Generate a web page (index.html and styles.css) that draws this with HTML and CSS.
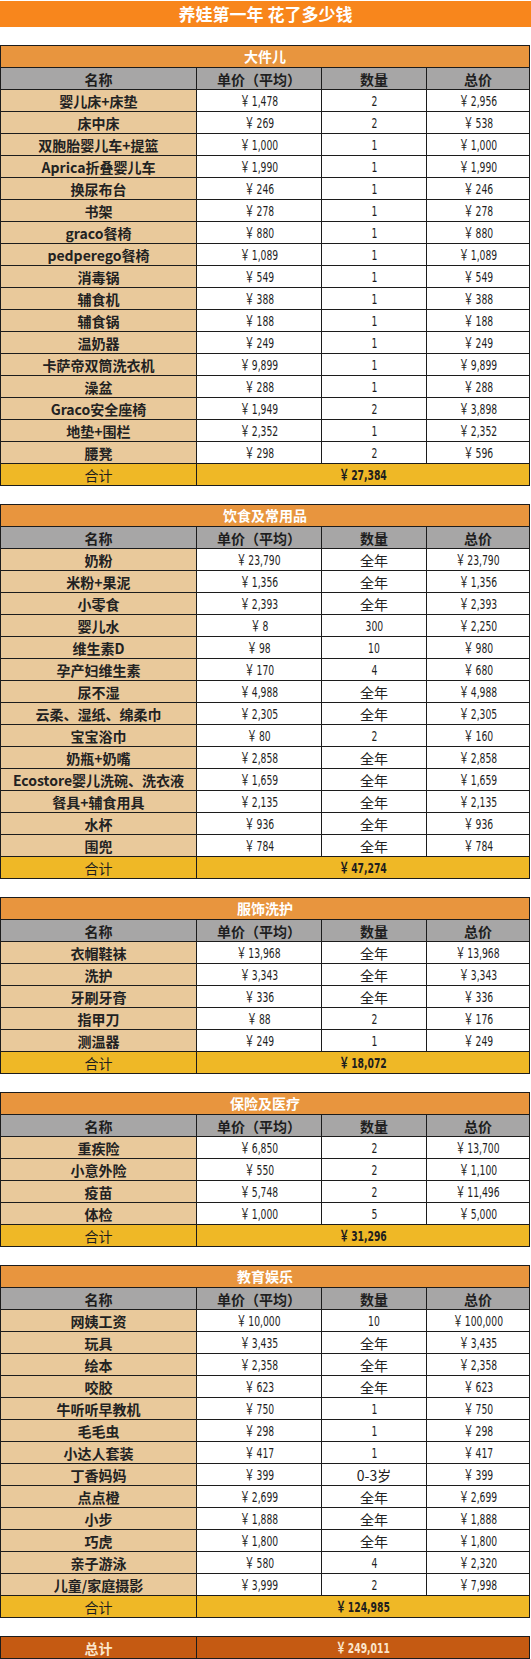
FILE: index.html
```html
<!DOCTYPE html>
<html lang="zh-CN">
<head>
<meta charset="utf-8">
<title>养娃第一年 花了多少钱</title>
<link rel="stylesheet" href="styles.css">
</head>
<body>
<div class="title">养娃第一年 花了多少钱</div>

<section class="sheet">
  <div class="sec">大件儿</div>
  <div class="row head"><div>名称</div><div>单价（平均）</div><div>数量</div><div>总价</div></div>
  <div class="row"><div class="name">婴儿床+床垫</div><div><span class="n"><span class="y">￥</span>1,478</span></div><div><span class="n">2</span></div><div><span class="n"><span class="y">￥</span>2,956</span></div></div>
  <div class="row"><div class="name">床中床</div><div><span class="n"><span class="y">￥</span>269</span></div><div><span class="n">2</span></div><div><span class="n"><span class="y">￥</span>538</span></div></div>
  <div class="row"><div class="name">双胞胎婴儿车+提篮</div><div><span class="n"><span class="y">￥</span>1,000</span></div><div><span class="n">1</span></div><div><span class="n"><span class="y">￥</span>1,000</span></div></div>
  <div class="row"><div class="name">Aprica折叠婴儿车</div><div><span class="n"><span class="y">￥</span>1,990</span></div><div><span class="n">1</span></div><div><span class="n"><span class="y">￥</span>1,990</span></div></div>
  <div class="row"><div class="name">换尿布台</div><div><span class="n"><span class="y">￥</span>246</span></div><div><span class="n">1</span></div><div><span class="n"><span class="y">￥</span>246</span></div></div>
  <div class="row"><div class="name">书架</div><div><span class="n"><span class="y">￥</span>278</span></div><div><span class="n">1</span></div><div><span class="n"><span class="y">￥</span>278</span></div></div>
  <div class="row"><div class="name">graco餐椅</div><div><span class="n"><span class="y">￥</span>880</span></div><div><span class="n">1</span></div><div><span class="n"><span class="y">￥</span>880</span></div></div>
  <div class="row"><div class="name">pedperego餐椅</div><div><span class="n"><span class="y">￥</span>1,089</span></div><div><span class="n">1</span></div><div><span class="n"><span class="y">￥</span>1,089</span></div></div>
  <div class="row"><div class="name">消毒锅</div><div><span class="n"><span class="y">￥</span>549</span></div><div><span class="n">1</span></div><div><span class="n"><span class="y">￥</span>549</span></div></div>
  <div class="row"><div class="name">辅食机</div><div><span class="n"><span class="y">￥</span>388</span></div><div><span class="n">1</span></div><div><span class="n"><span class="y">￥</span>388</span></div></div>
  <div class="row"><div class="name">辅食锅</div><div><span class="n"><span class="y">￥</span>188</span></div><div><span class="n">1</span></div><div><span class="n"><span class="y">￥</span>188</span></div></div>
  <div class="row"><div class="name">温奶器</div><div><span class="n"><span class="y">￥</span>249</span></div><div><span class="n">1</span></div><div><span class="n"><span class="y">￥</span>249</span></div></div>
  <div class="row"><div class="name">卡萨帝双筒洗衣机</div><div><span class="n"><span class="y">￥</span>9,899</span></div><div><span class="n">1</span></div><div><span class="n"><span class="y">￥</span>9,899</span></div></div>
  <div class="row"><div class="name">澡盆</div><div><span class="n"><span class="y">￥</span>288</span></div><div><span class="n">1</span></div><div><span class="n"><span class="y">￥</span>288</span></div></div>
  <div class="row"><div class="name">Graco安全座椅</div><div><span class="n"><span class="y">￥</span>1,949</span></div><div><span class="n">2</span></div><div><span class="n"><span class="y">￥</span>3,898</span></div></div>
  <div class="row"><div class="name">地垫+围栏</div><div><span class="n"><span class="y">￥</span>2,352</span></div><div><span class="n">1</span></div><div><span class="n"><span class="y">￥</span>2,352</span></div></div>
  <div class="row"><div class="name">腰凳</div><div><span class="n"><span class="y">￥</span>298</span></div><div><span class="n">2</span></div><div><span class="n"><span class="y">￥</span>596</span></div></div>
  <div class="row sum"><div class="lbl">合计</div><div class="span"><span class="n"><span class="y">￥</span>27,384</span></div></div>
</section>

<section class="sheet">
  <div class="sec">饮食及常用品</div>
  <div class="row head"><div>名称</div><div>单价（平均）</div><div>数量</div><div>总价</div></div>
  <div class="row"><div class="name">奶粉</div><div><span class="n"><span class="y">￥</span>23,790</span></div><div class="cn">全年</div><div><span class="n"><span class="y">￥</span>23,790</span></div></div>
  <div class="row"><div class="name">米粉+果泥</div><div><span class="n"><span class="y">￥</span>1,356</span></div><div class="cn">全年</div><div><span class="n"><span class="y">￥</span>1,356</span></div></div>
  <div class="row"><div class="name">小零食</div><div><span class="n"><span class="y">￥</span>2,393</span></div><div class="cn">全年</div><div><span class="n"><span class="y">￥</span>2,393</span></div></div>
  <div class="row"><div class="name">婴儿水</div><div><span class="n"><span class="y">￥</span>8</span></div><div><span class="n">300</span></div><div><span class="n"><span class="y">￥</span>2,250</span></div></div>
  <div class="row"><div class="name">维生素D</div><div><span class="n"><span class="y">￥</span>98</span></div><div><span class="n">10</span></div><div><span class="n"><span class="y">￥</span>980</span></div></div>
  <div class="row"><div class="name">孕产妇维生素</div><div><span class="n"><span class="y">￥</span>170</span></div><div><span class="n">4</span></div><div><span class="n"><span class="y">￥</span>680</span></div></div>
  <div class="row"><div class="name">尿不湿</div><div><span class="n"><span class="y">￥</span>4,988</span></div><div class="cn">全年</div><div><span class="n"><span class="y">￥</span>4,988</span></div></div>
  <div class="row"><div class="name">云柔、湿纸、绵柔巾</div><div><span class="n"><span class="y">￥</span>2,305</span></div><div class="cn">全年</div><div><span class="n"><span class="y">￥</span>2,305</span></div></div>
  <div class="row"><div class="name">宝宝浴巾</div><div><span class="n"><span class="y">￥</span>80</span></div><div><span class="n">2</span></div><div><span class="n"><span class="y">￥</span>160</span></div></div>
  <div class="row"><div class="name">奶瓶+奶嘴</div><div><span class="n"><span class="y">￥</span>2,858</span></div><div class="cn">全年</div><div><span class="n"><span class="y">￥</span>2,858</span></div></div>
  <div class="row"><div class="name">Ecostore婴儿洗碗、洗衣液</div><div><span class="n"><span class="y">￥</span>1,659</span></div><div class="cn">全年</div><div><span class="n"><span class="y">￥</span>1,659</span></div></div>
  <div class="row"><div class="name">餐具+辅食用具</div><div><span class="n"><span class="y">￥</span>2,135</span></div><div class="cn">全年</div><div><span class="n"><span class="y">￥</span>2,135</span></div></div>
  <div class="row"><div class="name">水杯</div><div><span class="n"><span class="y">￥</span>936</span></div><div class="cn">全年</div><div><span class="n"><span class="y">￥</span>936</span></div></div>
  <div class="row"><div class="name">围兜</div><div><span class="n"><span class="y">￥</span>784</span></div><div class="cn">全年</div><div><span class="n"><span class="y">￥</span>784</span></div></div>
  <div class="row sum"><div class="lbl">合计</div><div class="span"><span class="n"><span class="y">￥</span>47,274</span></div></div>
</section>

<section class="sheet">
  <div class="sec">服饰洗护</div>
  <div class="row head"><div>名称</div><div>单价（平均）</div><div>数量</div><div>总价</div></div>
  <div class="row"><div class="name">衣帽鞋袜</div><div><span class="n"><span class="y">￥</span>13,968</span></div><div class="cn">全年</div><div><span class="n"><span class="y">￥</span>13,968</span></div></div>
  <div class="row"><div class="name">洗护</div><div><span class="n"><span class="y">￥</span>3,343</span></div><div class="cn">全年</div><div><span class="n"><span class="y">￥</span>3,343</span></div></div>
  <div class="row"><div class="name">牙刷牙膏</div><div><span class="n"><span class="y">￥</span>336</span></div><div class="cn">全年</div><div><span class="n"><span class="y">￥</span>336</span></div></div>
  <div class="row"><div class="name">指甲刀</div><div><span class="n"><span class="y">￥</span>88</span></div><div><span class="n">2</span></div><div><span class="n"><span class="y">￥</span>176</span></div></div>
  <div class="row"><div class="name">测温器</div><div><span class="n"><span class="y">￥</span>249</span></div><div><span class="n">1</span></div><div><span class="n"><span class="y">￥</span>249</span></div></div>
  <div class="row sum"><div class="lbl">合计</div><div class="span"><span class="n"><span class="y">￥</span>18,072</span></div></div>
</section>

<section class="sheet">
  <div class="sec">保险及医疗</div>
  <div class="row head"><div>名称</div><div>单价（平均）</div><div>数量</div><div>总价</div></div>
  <div class="row"><div class="name">重疾险</div><div><span class="n"><span class="y">￥</span>6,850</span></div><div><span class="n">2</span></div><div><span class="n"><span class="y">￥</span>13,700</span></div></div>
  <div class="row"><div class="name">小意外险</div><div><span class="n"><span class="y">￥</span>550</span></div><div><span class="n">2</span></div><div><span class="n"><span class="y">￥</span>1,100</span></div></div>
  <div class="row"><div class="name">疫苗</div><div><span class="n"><span class="y">￥</span>5,748</span></div><div><span class="n">2</span></div><div><span class="n"><span class="y">￥</span>11,496</span></div></div>
  <div class="row"><div class="name">体检</div><div><span class="n"><span class="y">￥</span>1,000</span></div><div><span class="n">5</span></div><div><span class="n"><span class="y">￥</span>5,000</span></div></div>
  <div class="row sum"><div class="lbl">合计</div><div class="span"><span class="n"><span class="y">￥</span>31,296</span></div></div>
</section>

<section class="sheet">
  <div class="sec">教育娱乐</div>
  <div class="row head"><div>名称</div><div>单价（平均）</div><div>数量</div><div>总价</div></div>
  <div class="row"><div class="name">网姨工资</div><div><span class="n"><span class="y">￥</span>10,000</span></div><div><span class="n">10</span></div><div><span class="n"><span class="y">￥</span>100,000</span></div></div>
  <div class="row"><div class="name">玩具</div><div><span class="n"><span class="y">￥</span>3,435</span></div><div class="cn">全年</div><div><span class="n"><span class="y">￥</span>3,435</span></div></div>
  <div class="row"><div class="name">绘本</div><div><span class="n"><span class="y">￥</span>2,358</span></div><div class="cn">全年</div><div><span class="n"><span class="y">￥</span>2,358</span></div></div>
  <div class="row"><div class="name">咬胶</div><div><span class="n"><span class="y">￥</span>623</span></div><div class="cn">全年</div><div><span class="n"><span class="y">￥</span>623</span></div></div>
  <div class="row"><div class="name">牛听听早教机</div><div><span class="n"><span class="y">￥</span>750</span></div><div><span class="n">1</span></div><div><span class="n"><span class="y">￥</span>750</span></div></div>
  <div class="row"><div class="name">毛毛虫</div><div><span class="n"><span class="y">￥</span>298</span></div><div><span class="n">1</span></div><div><span class="n"><span class="y">￥</span>298</span></div></div>
  <div class="row"><div class="name">小达人套装</div><div><span class="n"><span class="y">￥</span>417</span></div><div><span class="n">1</span></div><div><span class="n"><span class="y">￥</span>417</span></div></div>
  <div class="row"><div class="name">丁香妈妈</div><div><span class="n"><span class="y">￥</span>399</span></div><div class="cn">0-3岁</div><div><span class="n"><span class="y">￥</span>399</span></div></div>
  <div class="row"><div class="name">点点橙</div><div><span class="n"><span class="y">￥</span>2,699</span></div><div class="cn">全年</div><div><span class="n"><span class="y">￥</span>2,699</span></div></div>
  <div class="row"><div class="name">小步</div><div><span class="n"><span class="y">￥</span>1,888</span></div><div class="cn">全年</div><div><span class="n"><span class="y">￥</span>1,888</span></div></div>
  <div class="row"><div class="name">巧虎</div><div><span class="n"><span class="y">￥</span>1,800</span></div><div class="cn">全年</div><div><span class="n"><span class="y">￥</span>1,800</span></div></div>
  <div class="row"><div class="name">亲子游泳</div><div><span class="n"><span class="y">￥</span>580</span></div><div><span class="n">4</span></div><div><span class="n"><span class="y">￥</span>2,320</span></div></div>
  <div class="row"><div class="name">儿童/家庭摄影</div><div><span class="n"><span class="y">￥</span>3,999</span></div><div><span class="n">2</span></div><div><span class="n"><span class="y">￥</span>7,998</span></div></div>
  <div class="row sum"><div class="lbl">合计</div><div class="span"><span class="n"><span class="y">￥</span>124,985</span></div></div>
</section>

<section class="sheet">
  <div class="row total"><div class="lbl">总计</div><div class="span"><span class="n"><span class="y">￥</span>249,011</span></div></div>
</section>
</body>
</html>
```

FILE: styles.css
```css
html, body {
  margin: 0;
  padding: 0;
  background: #ffffff;
}

body {
  width: 531px;
  font-family: "Noto Sans CJK SC", "Noto Sans", sans-serif;
  color: #1e1e1e;
}

.title {
  height: 26px;
  line-height: 26px;
  background: #f8861c;
  color: #ffffff;
  text-align: center;
  font-size: 17px;
  font-weight: 700;
  margin-top: 1px;
}

.sheet {
  width: 530px;
  border-top: 1px solid #1c1c1c;
  margin-top: 18px;
}

.sec {
  box-sizing: border-box;
  height: 22px;
  line-height: 21px;
  border-left: 1px solid #1c1c1c;
  border-right: 1px solid #1c1c1c;
  border-bottom: 1px solid #1c1c1c;
  background: #e8953e;
  color: #ffffff;
  text-align: center;
  font-weight: 700;
  font-size: 14px;
}

.row {
  display: grid;
  grid-template-columns: 197px 125px 105px 103px;
  box-sizing: border-box;
  height: 22px;
  border-bottom: 1px solid #1c1c1c;
}

.row > div {
  display: flex;
  align-items: center;
  justify-content: center;
  border-right: 1px solid #1c1c1c;
  background: #ffffff;
  font-size: 13px;
  line-height: 1;
  white-space: nowrap;
  overflow: hidden;
}

.row > div:first-child {
  border-left: 1px solid #1c1c1c;
}

.row > div.span {
  grid-column: 2 / 5;
}

.head > div {
  background: #a7a6a6;
  color: #1e1e1e;
  font-weight: 700;
  font-size: 14px;
}

.row > div.name {
  background: #e9c99b;
  font-weight: 700;
  font-size: 14px;
  color: #222222;
}

.row > div.cn {
  font-size: 14px;
  color: #222222;
}

.sum > div {
  background: #efb826;
  font-weight: 700;
}

.sum > div.lbl {
  font-weight: 400;
  font-size: 14px;
}

.total > div {
  background: #c55a12;
  color: #fbe6cc;
  font-weight: 700;
}

.total > div.lbl {
  font-size: 14px;
}

.n {
  display: inline-block;
  font-family: "DejaVu Sans", "Liberation Sans", sans-serif;
  font-size: 14px;
  line-height: 16px;
  transform: scaleX(0.66);
  transform-origin: center;
}

.y {
  font-family: "Noto Sans CJK SC", sans-serif;
  font-size: 15px;
  line-height: 16px;
  margin-right: 3px;
}

.sum .n, .total .n {
  font-weight: 700;
}
```
